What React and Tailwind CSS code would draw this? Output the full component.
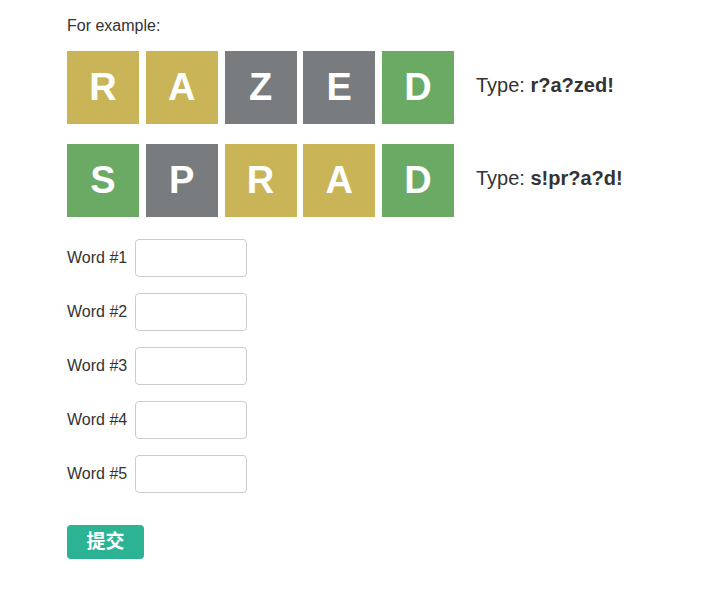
import React from 'react';

const COLORS = {
  y: 'bg-[#c9b458]',
  g: 'bg-[#787c7e]',
  G: 'bg-[#6aaa64]',
};

const examples = [
  { word: 'RAZED', marks: 'yyggG', hint: 'r?a?zed!' },
  { word: 'SPRAD', marks: 'GgyyG', hint: 's!pr?a?d!' },
];

const Tile = ({ letter, mark }) => (
  <div className={`w-[72px] h-[73px] ${COLORS[mark]} flex items-center justify-center text-white font-bold text-[38px]`}>
    {letter}
  </div>
);

export default function App() {
  return (
    <div className="min-h-screen bg-white text-[#333] pl-[67px] pt-[15px]" style={{ fontFamily: '"Liberation Sans", Arial, "Noto Sans CJK SC", sans-serif' }}>
      <p className="text-[16px] leading-[22px] mb-[14px]">For example:</p>

      <div className="flex flex-col gap-[20px]">
        {examples.map(ex => (
          <div key={ex.word} className="flex items-center">
            <div className="flex gap-[6.75px]">
              {ex.word.split('').map((ch, i) => (
                <Tile key={i} letter={ch} mark={ex.marks[i]} />
              ))}
            </div>
            <span className="ml-[22px] text-[20px] leading-[24px] -mt-[5px]">
              Type: <b>{ex.hint}</b>
            </span>
          </div>
        ))}
      </div>

      <div className="flex flex-col gap-[16px] mt-[22px]">
        {[1, 2, 3, 4, 5].map(n => (
          <div key={n} className="flex items-center">
            <label className="text-[16px] mr-[8px]">Word #{n}</label>
            <input
              type="text"
              className="w-[112px] h-[38px] border border-[#ccc] rounded-[4px] px-2 outline-none"
            />
          </div>
        ))}
      </div>

      <button className="mt-[32px] w-[77px] h-[34px] bg-[#2cb394] text-white font-bold text-[19px] rounded-[4px] flex items-center justify-center">
        提交
      </button>
    </div>
  );
}
